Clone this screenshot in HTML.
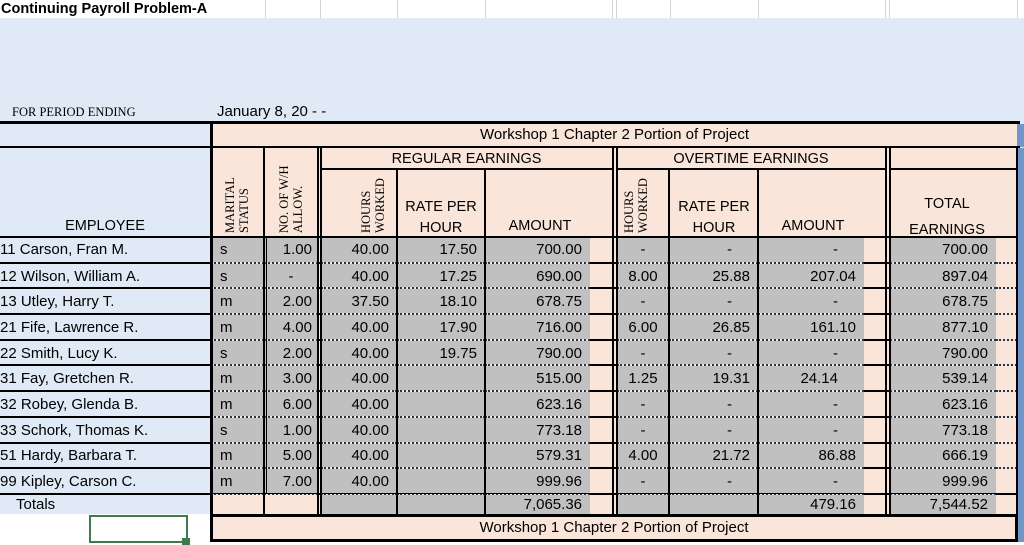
<!DOCTYPE html>
<html><head><meta charset="utf-8"><style>
*{margin:0;padding:0;box-sizing:border-box}
body{width:1024px;height:545px;position:relative;overflow:hidden;background:#dfeaf6;font-family:"Liberation Sans",Arial,sans-serif;font-size:15px;color:#000}
.a{position:absolute}
.pe{background:#f9e5d9}
.k{position:absolute;background:#000}
.vt{position:absolute;writing-mode:vertical-rl;transform:rotate(180deg);font-family:"Liberation Serif",serif;font-size:12.5px;line-height:14px;text-align:left}
.h{position:absolute;text-align:center;font-size:14.5px}
table{position:absolute;left:0;top:237px;border-collapse:collapse;table-layout:fixed;width:1024px}
td{height:25.7px;padding:0;padding-top:2px;white-space:nowrap;border-bottom:2px dotted #333;text-align:right;line-height:20px;overflow:hidden}
td.e{background:#dfeaf6;border-bottom:2px solid #000;text-align:left}
td.m{text-align:left;padding-left:9px}
td.g{background:#c0c0c0}
td.p{background:#f9e5d9;border-bottom:2px solid #000}
td.c{text-align:center}
td.b{background:#6f95c9;border-bottom:none}
tr.t td{height:20px;line-height:17px;padding-top:0;border-bottom:none}
</style></head><body>
<div class="a" style="left:0;top:0;width:1024px;height:18px;background:#fff"></div>
<div class="a" style="left:1px;top:1px;font-weight:bold;font-size:14.5px;line-height:16px">Continuing Payroll Problem-A</div>
<div class="a" style="left:265px;top:0;width:1px;height:18px;background:#d4d4d4"></div>
<div class="a" style="left:320px;top:0;width:1px;height:18px;background:#d4d4d4"></div>
<div class="a" style="left:397px;top:0;width:1px;height:18px;background:#d4d4d4"></div>
<div class="a" style="left:485px;top:0;width:1px;height:18px;background:#d4d4d4"></div>
<div class="a" style="left:612px;top:0;width:1px;height:18px;background:#d4d4d4"></div>
<div class="a" style="left:616px;top:0;width:1px;height:18px;background:#d4d4d4"></div>
<div class="a" style="left:670px;top:0;width:1px;height:18px;background:#d4d4d4"></div>
<div class="a" style="left:758px;top:0;width:1px;height:18px;background:#d4d4d4"></div>
<div class="a" style="left:885px;top:0;width:1px;height:18px;background:#d4d4d4"></div>
<div class="a" style="left:889px;top:0;width:1px;height:18px;background:#d4d4d4"></div>
<div class="a" style="left:1017px;top:0;width:1px;height:18px;background:#d4d4d4"></div>

<div class="a" style="left:12px;top:105px;font-family:'Liberation Serif',serif;font-size:12.5px">FOR PERIOD ENDING</div>
<div class="a" style="left:217px;top:103px;font-size:15px">January 8, 20 - -</div>

<div class="a pe" style="left:212px;top:124px;width:805px;height:23px"></div>
<div class="a" style="left:1017px;top:124px;width:7px;height:23px;background:#6f95c9"></div>
<div class="h" style="left:212px;top:126px;width:805px;font-size:15px">Workshop 1 Chapter 2 Portion of Project</div>
<div class="k" style="left:0;top:121px;width:1020px;height:3px"></div>
<div class="k" style="left:0;top:146px;width:1020px;height:2px"></div>
<div class="k" style="left:210px;top:121px;width:3px;height:27px"></div>

<div class="a pe" style="left:213px;top:148px;width:804px;height:89px"></div>
<div class="a" style="left:1017px;top:148px;width:7px;height:89px;background:#6f95c9"></div>
<div class="h" style="left:321px;top:151px;width:291px">REGULAR EARNINGS</div>
<div class="h" style="left:617px;top:151px;width:268px">OVERTIME EARNINGS</div>
<div class="k" style="left:320px;top:168px;width:292px;height:2px"></div>
<div class="k" style="left:616px;top:168px;width:269px;height:2px"></div>
<div class="k" style="left:889px;top:168px;width:127px;height:2px"></div>
<div class="vt" style="left:223px;top:172px;height:61px">MARITAL<br>STATUS</div>
<div class="vt" style="left:277px;top:164px;height:69px">NO. OF W/H<br>ALLOW.</div>
<div class="vt" style="left:359px;top:176px;height:57px">HOURS<br>WORKED</div>
<div class="vt" style="left:622px;top:176px;height:57px">HOURS<br>WORKED</div>
<div class="h" style="left:397px;top:197px;width:88px;line-height:21px">RATE PER<br>HOUR</div>
<div class="h" style="left:485px;top:218px;width:110px">AMOUNT</div>
<div class="h" style="left:670px;top:197px;width:88px;line-height:21px">RATE PER<br>HOUR</div>
<div class="h" style="left:758px;top:218px;width:110px">AMOUNT</div>
<div class="h" style="left:889px;top:191px;width:116px;line-height:26px">TOTAL<br>EARNINGS</div>
<div class="h" style="left:0;top:218px;width:210px">EMPLOYEE</div>

<table>
<colgroup><col style="width:211px"><col style="width:53px"><col style="width:54px"><col style="width:3px"><col style="width:76px"><col style="width:88px"><col style="width:105px"><col style="width:22px"><col style="width:5px"><col style="width:52px"><col style="width:89px"><col style="width:106px"><col style="width:21px"><col style="width:5px"><col style="width:106px"><col style="width:21px"><col style="width:7px"></colgroup>
<tr><td class="e">11 Carson, Fran M.</td><td class="g m">s</td><td class="g" style="padding-right:6px">1.00</td><td class="p"></td><td class="g" style="padding-right:8px">40.00</td><td class="g" style="padding-right:8px">17.50</td><td class="g" style="padding-right:8px">700.00</td><td class="p"></td><td class="p"></td><td class="g c">-</td><td class="g" style="padding-right:26px">-</td><td class="g" style="padding-right:26px">-</td><td class="p"></td><td class="p"></td><td class="g" style="padding-right:8px">700.00</td><td class="pe" style="border-bottom:2px dotted #333"></td><td class="b"></td></tr>
<tr><td class="e">12 Wilson, William A.</td><td class="g m">s</td><td class="g c">-</td><td class="p"></td><td class="g" style="padding-right:8px">40.00</td><td class="g" style="padding-right:8px">17.25</td><td class="g" style="padding-right:8px">690.00</td><td class="p"></td><td class="p"></td><td class="g c">8.00</td><td class="g" style="padding-right:8px">25.88</td><td class="g" style="padding-right:8px">207.04</td><td class="p"></td><td class="p"></td><td class="g" style="padding-right:8px">897.04</td><td class="pe" style="border-bottom:2px dotted #333"></td><td class="b"></td></tr>
<tr><td class="e">13 Utley, Harry T.</td><td class="g m">m</td><td class="g" style="padding-right:6px">2.00</td><td class="p"></td><td class="g" style="padding-right:8px">37.50</td><td class="g" style="padding-right:8px">18.10</td><td class="g" style="padding-right:8px">678.75</td><td class="p"></td><td class="p"></td><td class="g c">-</td><td class="g" style="padding-right:26px">-</td><td class="g" style="padding-right:26px">-</td><td class="p"></td><td class="p"></td><td class="g" style="padding-right:8px">678.75</td><td class="pe" style="border-bottom:2px dotted #333"></td><td class="b"></td></tr>
<tr><td class="e">21 Fife, Lawrence R.</td><td class="g m">m</td><td class="g" style="padding-right:6px">4.00</td><td class="p"></td><td class="g" style="padding-right:8px">40.00</td><td class="g" style="padding-right:8px">17.90</td><td class="g" style="padding-right:8px">716.00</td><td class="p"></td><td class="p"></td><td class="g c">6.00</td><td class="g" style="padding-right:8px">26.85</td><td class="g" style="padding-right:8px">161.10</td><td class="p"></td><td class="p"></td><td class="g" style="padding-right:8px">877.10</td><td class="pe" style="border-bottom:2px dotted #333"></td><td class="b"></td></tr>
<tr><td class="e">22 Smith, Lucy K.</td><td class="g m">s</td><td class="g" style="padding-right:6px">2.00</td><td class="p"></td><td class="g" style="padding-right:8px">40.00</td><td class="g" style="padding-right:8px">19.75</td><td class="g" style="padding-right:8px">790.00</td><td class="p"></td><td class="p"></td><td class="g c">-</td><td class="g" style="padding-right:26px">-</td><td class="g" style="padding-right:26px">-</td><td class="p"></td><td class="p"></td><td class="g" style="padding-right:8px">790.00</td><td class="pe" style="border-bottom:2px dotted #333"></td><td class="b"></td></tr>
<tr><td class="e">31 Fay, Gretchen R.</td><td class="g m">m</td><td class="g" style="padding-right:6px">3.00</td><td class="p"></td><td class="g" style="padding-right:8px">40.00</td><td class="g"></td><td class="g" style="padding-right:8px">515.00</td><td class="p"></td><td class="p"></td><td class="g c">1.25</td><td class="g" style="padding-right:8px">19.31</td><td class="g" style="padding-right:26px">24.14</td><td class="p"></td><td class="p"></td><td class="g" style="padding-right:8px">539.14</td><td class="pe" style="border-bottom:2px dotted #333"></td><td class="b"></td></tr>
<tr><td class="e">32 Robey, Glenda B.</td><td class="g m">m</td><td class="g" style="padding-right:6px">6.00</td><td class="p"></td><td class="g" style="padding-right:8px">40.00</td><td class="g"></td><td class="g" style="padding-right:8px">623.16</td><td class="p"></td><td class="p"></td><td class="g c">-</td><td class="g" style="padding-right:26px">-</td><td class="g" style="padding-right:26px">-</td><td class="p"></td><td class="p"></td><td class="g" style="padding-right:8px">623.16</td><td class="pe" style="border-bottom:2px dotted #333"></td><td class="b"></td></tr>
<tr><td class="e">33 Schork, Thomas K.</td><td class="g m">s</td><td class="g" style="padding-right:6px">1.00</td><td class="p"></td><td class="g" style="padding-right:8px">40.00</td><td class="g"></td><td class="g" style="padding-right:8px">773.18</td><td class="p"></td><td class="p"></td><td class="g c">-</td><td class="g" style="padding-right:26px">-</td><td class="g" style="padding-right:26px">-</td><td class="p"></td><td class="p"></td><td class="g" style="padding-right:8px">773.18</td><td class="pe" style="border-bottom:2px dotted #333"></td><td class="b"></td></tr>
<tr><td class="e">51 Hardy, Barbara T.</td><td class="g m">m</td><td class="g" style="padding-right:6px">5.00</td><td class="p"></td><td class="g" style="padding-right:8px">40.00</td><td class="g"></td><td class="g" style="padding-right:8px">579.31</td><td class="p"></td><td class="p"></td><td class="g c">4.00</td><td class="g" style="padding-right:8px">21.72</td><td class="g" style="padding-right:8px">86.88</td><td class="p"></td><td class="p"></td><td class="g" style="padding-right:8px">666.19</td><td class="pe" style="border-bottom:2px dotted #333"></td><td class="b"></td></tr>
<tr><td class="e">99 Kipley, Carson C.</td><td class="g m">m</td><td class="g" style="padding-right:6px">7.00</td><td class="p"></td><td class="g" style="padding-right:8px">40.00</td><td class="g"></td><td class="g" style="padding-right:8px">999.96</td><td class="p"></td><td class="p"></td><td class="g c">-</td><td class="g" style="padding-right:26px">-</td><td class="g" style="padding-right:26px">-</td><td class="p"></td><td class="p"></td><td class="g" style="padding-right:8px">999.96</td><td class="pe" style="border-bottom:2px solid #000"></td><td class="b"></td></tr>
<tr class="t"><td class="e" style="padding-left:16px">Totals</td><td class="pe"></td><td class="pe"></td><td class="pe"></td><td class="g"></td><td class="g"></td><td class="g" style="padding-right:8px">7,065.36</td><td class="pe"></td><td class="pe"></td><td class="g"></td><td class="g"></td><td class="g" style="padding-right:8px">479.16</td><td class="pe"></td><td class="pe"></td><td class="g" style="padding-right:8px">7,544.52</td><td class="pe"></td><td class="b"></td></tr>
</table>

<div class="k" style="left:210px;top:148px;width:3px;height:367px"></div>
<div class="k" style="left:263px;top:148px;width:2px;height:367px"></div>
<div class="k" style="left:266px;top:237px;width:1px;height:257px"></div>
<div class="k" style="left:317px;top:148px;width:2px;height:367px"></div>
<div class="k" style="left:320px;top:148px;width:2px;height:367px"></div>
<div class="k" style="left:396px;top:168px;width:2px;height:347px"></div>
<div class="k" style="left:484px;top:168px;width:2px;height:347px"></div>
<div class="k" style="left:612px;top:148px;width:2px;height:367px"></div>
<div class="k" style="left:616px;top:148px;width:2px;height:367px"></div>
<div class="k" style="left:668px;top:168px;width:2px;height:347px"></div>
<div class="k" style="left:757px;top:168px;width:2px;height:347px"></div>
<div class="k" style="left:885px;top:148px;width:2px;height:367px"></div>
<div class="k" style="left:889px;top:148px;width:2px;height:367px"></div>
<div class="k" style="left:1016px;top:148px;width:2px;height:367px"></div>
<div class="k" style="left:0;top:236px;width:1018px;height:2px"></div>
<div class="k" style="left:0;top:493px;width:1018px;height:1px"></div>

<div class="a" style="left:0;top:514px;width:1024px;height:31px;background:#fff"></div>
<div class="a" style="left:89px;top:515px;width:99px;height:28px;border:2px solid #3f7a4c"></div>
<div class="a" style="left:182px;top:538px;width:8px;height:7px;background:#3f7a4c"></div>
<div class="a pe" style="left:210px;top:514px;width:808px;height:28px;border:3px solid #000"></div>
<div class="a" style="left:1018px;top:514px;width:6px;height:28px;background:#6f95c9"></div>
<div class="h" style="left:210px;top:519px;width:808px;font-size:15px">Workshop 1 Chapter 2 Portion of Project</div>
</body></html>
